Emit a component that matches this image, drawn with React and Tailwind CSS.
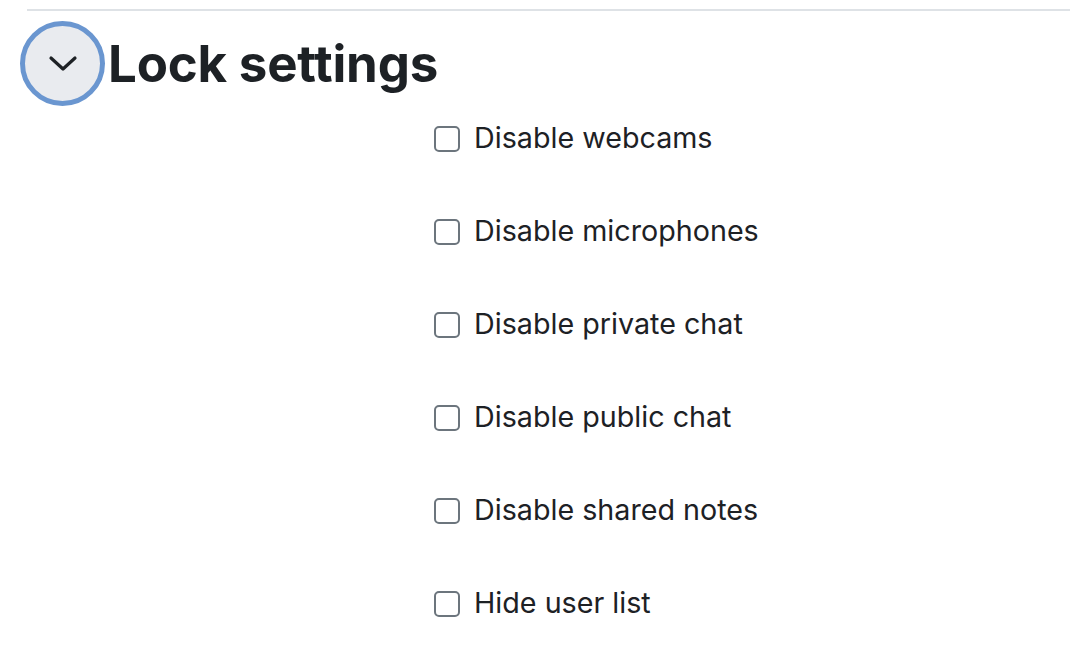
export default function App() {
    const items = [
        'Disable webcams',
        'Disable microphones',
        'Disable private chat',
        'Disable public chat',
        'Disable shared notes',
        'Hide user list',
    ];

    return (
        <div className="w-[1070px] h-[656px] bg-white overflow-hidden text-[#1d2125]" style={{ fontFamily: 'Inter, "Noto Sans", sans-serif' }}>
            <div className="ml-[27px] mt-[9px] border-t-2 border-[#dee2e6]" />

            <div className="flex items-center ml-[20px] mt-[10px]">
                <div className="w-[85px] h-[85px] rounded-full bg-[#e9ebef] border-[5px] border-[#6a96d0] flex items-center justify-center shrink-0">
                    <svg width="30" height="17" viewBox="0 0 30 17" fill="none" stroke="#1d2125" strokeWidth="3.2" strokeLinecap="round" strokeLinejoin="round">
                        <path d="M3 3l12 11 12-11" />
                    </svg>
                </div>
                <h2 className="ml-[3px] text-[51px] font-bold leading-none tracking-[-0.2px] -mt-[1px]">Lock settings</h2>
            </div>

            <div className="ml-[434px] mt-[15px] flex flex-col gap-[58px]">
                {items.map((label) => (
                    <label key={label} className="flex items-center h-[35px]">
                        <span className="w-[26px] h-[26px] rounded-[5px] border-2 border-[#6c757d] bg-white shrink-0" />
                        <span className="ml-[14px] text-[28.7px] leading-none">{label}</span>
                    </label>
                ))}
            </div>
        </div>
    );
}
